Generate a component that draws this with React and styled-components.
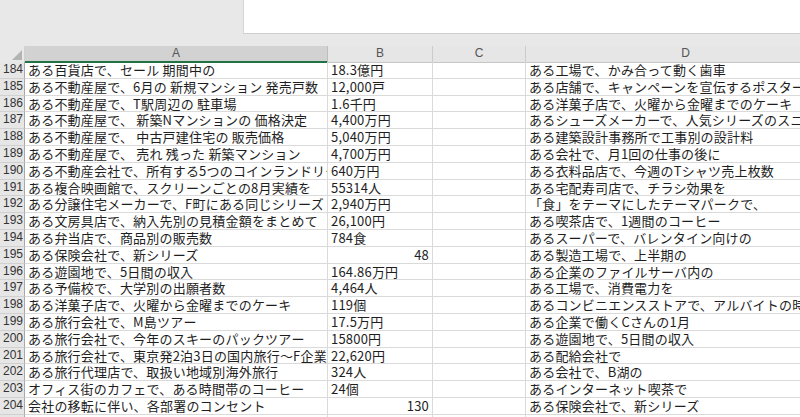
import React from 'react';
import styled, { createGlobalStyle } from 'styled-components';

const GlobalStyle = createGlobalStyle`
  html, body {
    margin: 0;
    padding: 0;
    background: #ffffff;
  }
  body {
    font-family: "Noto Sans CJK JP", "Liberation Sans", sans-serif;
    overflow: hidden;
  }
`;

const COLS = '25px 303px 105px 93px 320px';
const ROW_H = 16.8;

const rows = [
  [184, 'ある百貨店で、セール 期間中の', '18.3億円', '', 'ある工場で、かみ合って動く歯車'],
  [185, 'ある不動産屋で、6月の 新規マンション 発売戸数', '12,000戸', '', 'ある店舗で、キャンペーンを宣伝するポスター'],
  [186, 'ある不動産屋で、T駅周辺の 駐車場', '1.6千円', '', 'ある洋菓子店で、火曜から金曜までのケーキ'],
  [187, 'ある不動産屋で、 新築Nマンションの 価格決定', '4,400万円', '', 'あるシューズメーカーで、人気シリーズのスニーカー'],
  [188, 'ある不動産屋で、 中古戸建住宅の 販売価格', '5,040万円', '', 'ある建築設計事務所で工事別の設計料'],
  [189, 'ある不動産屋で、 売れ 残った 新築マンション', '4,700万円', '', 'ある会社で、月1回の仕事の後に'],
  [190, 'ある不動産会社で、所有する5つのコインランドリー', '640万円', '', 'ある衣料品店で、今週のTシャツ売上枚数'],
  [191, 'ある複合映画館で、スクリーンごとの8月実績を', '55314人', '', 'ある宅配寿司店で、チラシ効果を'],
  [192, 'ある分譲住宅メーカーで、F町にある同じシリーズ', '2,940万円', '', '「食」をテーマにしたテーマパークで、'],
  [193, 'ある文房具店で、納入先別の見積金額をまとめて', '26,100円', '', 'ある喫茶店で、1週間のコーヒー'],
  [194, 'ある弁当店で、商品別の販売数', '784食', '', 'あるスーパーで、バレンタイン向けの'],
  [195, 'ある保険会社で、新シリーズ', 48, '', 'ある製造工場で、上半期の'],
  [196, 'ある遊園地で、5日間の収入', '164.86万円', '', 'ある企業のファイルサーバ内の'],
  [197, 'ある予備校で、大学別の出願者数', '4,464人', '', 'ある工場で、消費電力を'],
  [198, 'ある洋菓子店で、火曜から金曜までのケーキ', '119個', '', 'あるコンビニエンスストアで、アルバイトの時給'],
  [199, 'ある旅行会社で、M島ツアー', '17.5万円', '', 'ある企業で働くCさんの1月'],
  [200, 'ある旅行会社で、今年のスキーのパックツアー', '15800円', '', 'ある遊園地で、5日間の収入'],
  [201, 'ある旅行会社で、東京発2泊3日の国内旅行～F企業', '22,620円', '', 'ある配給会社で'],
  [202, 'ある旅行代理店で、取扱い地域別海外旅行', '324人', '', 'ある会社で、B湖の'],
  [203, 'オフィス街のカフェで、ある時間帯のコーヒー', '24個', '', 'あるインターネット喫茶で'],
  [204, '会社の移転に伴い、各部署のコンセント', 130, '', 'ある保険会社で、新シリーズ'],
  [205, '', '', '', ''],
];

const Page = styled.div`
  width: 800px;
  height: 417px;
  overflow: hidden;
  background: #ffffff;
`;

const TopBar = styled.div`
  height: 46px;
  background: #e8e8e8;
  box-sizing: border-box;
  padding-left: 243px;
`;

const FormulaBox = styled.div`
  height: 34px;
  background: #ffffff;
  box-sizing: border-box;
  border-left: 1px solid #d6d6d6;
  border-bottom: 1px solid #cfcfcf;
`;

const Row = styled.div`
  display: grid;
  grid-template-columns: ${COLS};
  height: ${(p) => p.$h}px;
`;

const Corner = styled.div`
  background: #e8e8e8;
  border-right: 1px solid #cfcfcf;
  border-bottom: 1px solid #c6c6c6;
  display: flex;
  align-items: flex-end;
  justify-content: flex-end;
  padding: 0 2px 2px 0;
  box-sizing: border-box;
`;

const ColHeader = styled.div`
  background: ${(p) => (p.$active ? '#d2d2d2' : '#e6e6e6')};
  border-right: 1px solid ${(p) => (p.$active ? '#bdbdbd' : '#cbcbcb')};
  border-bottom: ${(p) => (p.$active ? '2px solid #217346' : '1px solid #c6c6c6')};
  box-sizing: border-box;
  font-family: "Liberation Sans", Arial, sans-serif;
  font-size: 12px;
  color: #555555;
  text-align: center;
  line-height: 15px;
`;

const RowNum = styled.div`
  background: #e6e6e6;
  border-right: 1px solid #a9a9a9;
  border-bottom: 1px solid #d0d0d0;
  box-sizing: border-box;
  font-family: "Liberation Sans", Arial, sans-serif;
  font-size: 12px;
  color: #333333;
  text-align: right;
  padding-right: 1px;
  line-height: ${ROW_H - 1}px;
`;

const Cell = styled.div`
  border-right: 1px solid #dadada;
  border-bottom: 1px solid #dadada;
  box-sizing: border-box;
  font-size: 13px;
  letter-spacing: 0.2px;
  color: #1e1e1e;
  white-space: pre;
  overflow: hidden;
  line-height: ${ROW_H - 1}px;
  text-align: ${(p) => p.$align || 'left'};
  padding: ${(p) => (p.$align === 'right' ? '0 3px 0 0' : '0 0 0 3px')};
`;

const Triangle = () => (
  <svg width="10" height="10" viewBox="0 0 10 10">
    <polygon points="10,0 10,10 0,10" fill="#b4b4b4" />
  </svg>
);

export default function App() {
  return (
    <Page>
      <GlobalStyle />
      <TopBar>
        <FormulaBox />
      </TopBar>
      <Row $h={16}>
        <Corner>
          <Triangle />
        </Corner>
        <ColHeader $active>A</ColHeader>
        <ColHeader>B</ColHeader>
        <ColHeader>C</ColHeader>
        <ColHeader>D</ColHeader>
      </Row>
      {rows.map(([n, a, b, c, d]) => (
        <Row key={n} $h={ROW_H}>
          <RowNum>{n}</RowNum>
          <Cell>{a}</Cell>
          <Cell $align={typeof b === 'number' ? 'right' : 'left'}>{b}</Cell>
          <Cell>{c}</Cell>
          <Cell>{d}</Cell>
        </Row>
      ))}
    </Page>
  );
}
